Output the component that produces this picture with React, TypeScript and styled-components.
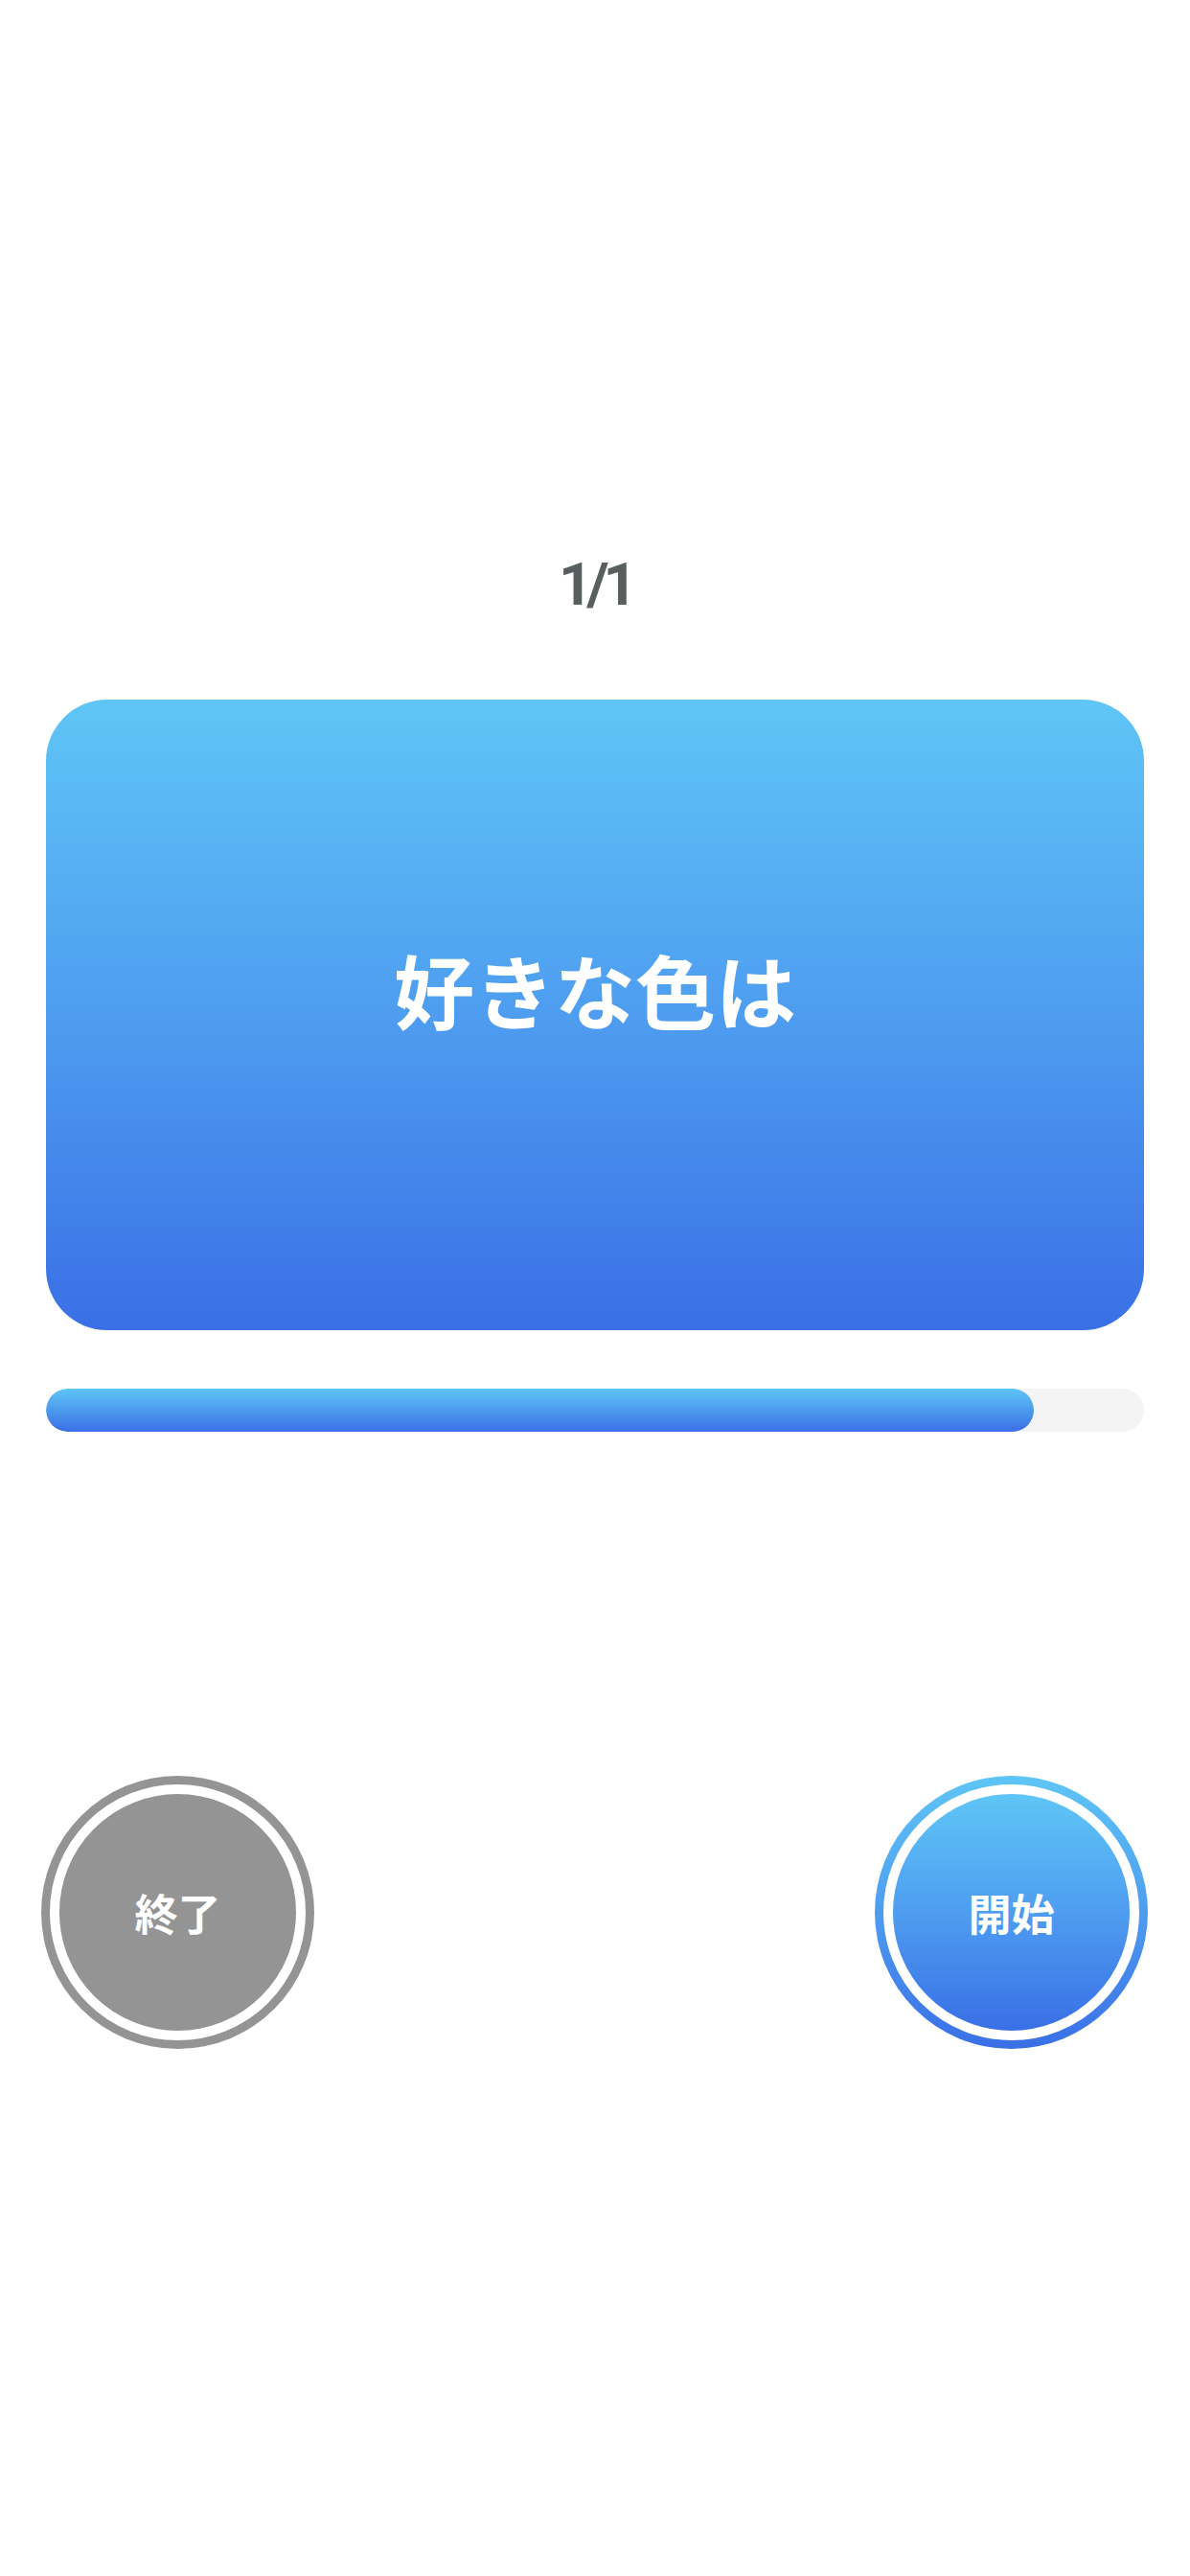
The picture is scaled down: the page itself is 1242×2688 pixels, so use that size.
import styled, { createGlobalStyle, css } from 'styled-components';

const GlobalStyle = createGlobalStyle`
    html, body {
        margin: 0;
        padding: 0;
        background: #ffffff;
    }
    body {
        font-family: "Noto Sans", "Noto Sans CJK JP", sans-serif;
    }
`

const blueGradient = 'linear-gradient(180deg, #5fc5f6 0%, #4e9df0 50%, #3a6fe6 100%)'

type Variant = 'gray' | 'blue'

const questions = [
    { text: '好きな色は' }
]

const App = () => {
    const current = 1
    const progress = 90

    return (
        <Page>
            <GlobalStyle />
            <Counter>{current}/{questions.length}</Counter>
            <Card>
                <Question>{questions[current - 1].text}</Question>
            </Card>
            <Track>
                <Fill style={{ width: `${progress}%` }} />
            </Track>
            <Actions>
                <RoundButton $variant="gray">
                    <Core $variant="gray">終了</Core>
                </RoundButton>
                <RoundButton $variant="blue">
                    <Core $variant="blue">開始</Core>
                </RoundButton>
            </Actions>
        </Page>
    );
}

export default App;

const Page = styled.div`
    width: 1242px;
    min-height: 2688px;
    display: flex;
    flex-direction: column;
    align-items: stretch;
    box-sizing: border-box;
`

const Counter = styled.div`
    margin-top: 572px;
    height: 76px;
    line-height: 76px;
    text-align: center;
    font-family: Roboto, "Liberation Sans", sans-serif;
    font-size: 62px;
    font-weight: 700;
    letter-spacing: -6px;
    color: #595e5e;
`

const Card = styled.div`
    margin: 82px 48px 0;
    height: 658px;
    box-sizing: border-box;
    padding-bottom: 56px;
    border-radius: 64px;
    background: ${blueGradient};
    display: flex;
    align-items: center;
    justify-content: center;
`

const Question = styled.span`
    font-family: "Noto Sans CJK JP", sans-serif;
    font-size: 84px;
    font-weight: 600;
    color: #ffffff;
`

const Track = styled.div`
    margin: 61px 48px 0;
    height: 45px;
    border-radius: 23px;
    background: #f4f4f4;
    overflow: hidden;
`

const Fill = styled.div`
    height: 100%;
    border-radius: 23px;
    background: linear-gradient(180deg, #5fc5f6 0%, #3a6fe6 100%);
`

const Actions = styled.div`
    margin-top: 359px;
    padding: 0 44px 0 43px;
    display: flex;
    justify-content: space-between;
`

const fillFor = (v: Variant) => v === 'gray'
    ? css`background: #939493;`
    : css`background: ${blueGradient};`

const RoundButton = styled.button<{ $variant: Variant }>`
    width: 285px;
    height: 285px;
    padding: 9px;
    border: none;
    border-radius: 50%;
    box-sizing: border-box;
    ${p => fillFor(p.$variant)}
    cursor: pointer;
`

const Core = styled.div<{ $variant: Variant }>`
    width: 100%;
    height: 100%;
    box-sizing: border-box;
    border: 10px solid #ffffff;
    border-radius: 50%;
    ${p => fillFor(p.$variant)}
    display: flex;
    align-items: center;
    justify-content: center;
    font-family: "Noto Sans CJK JP", sans-serif;
    font-size: 45px;
    font-weight: 600;
    color: #ffffff;
`
